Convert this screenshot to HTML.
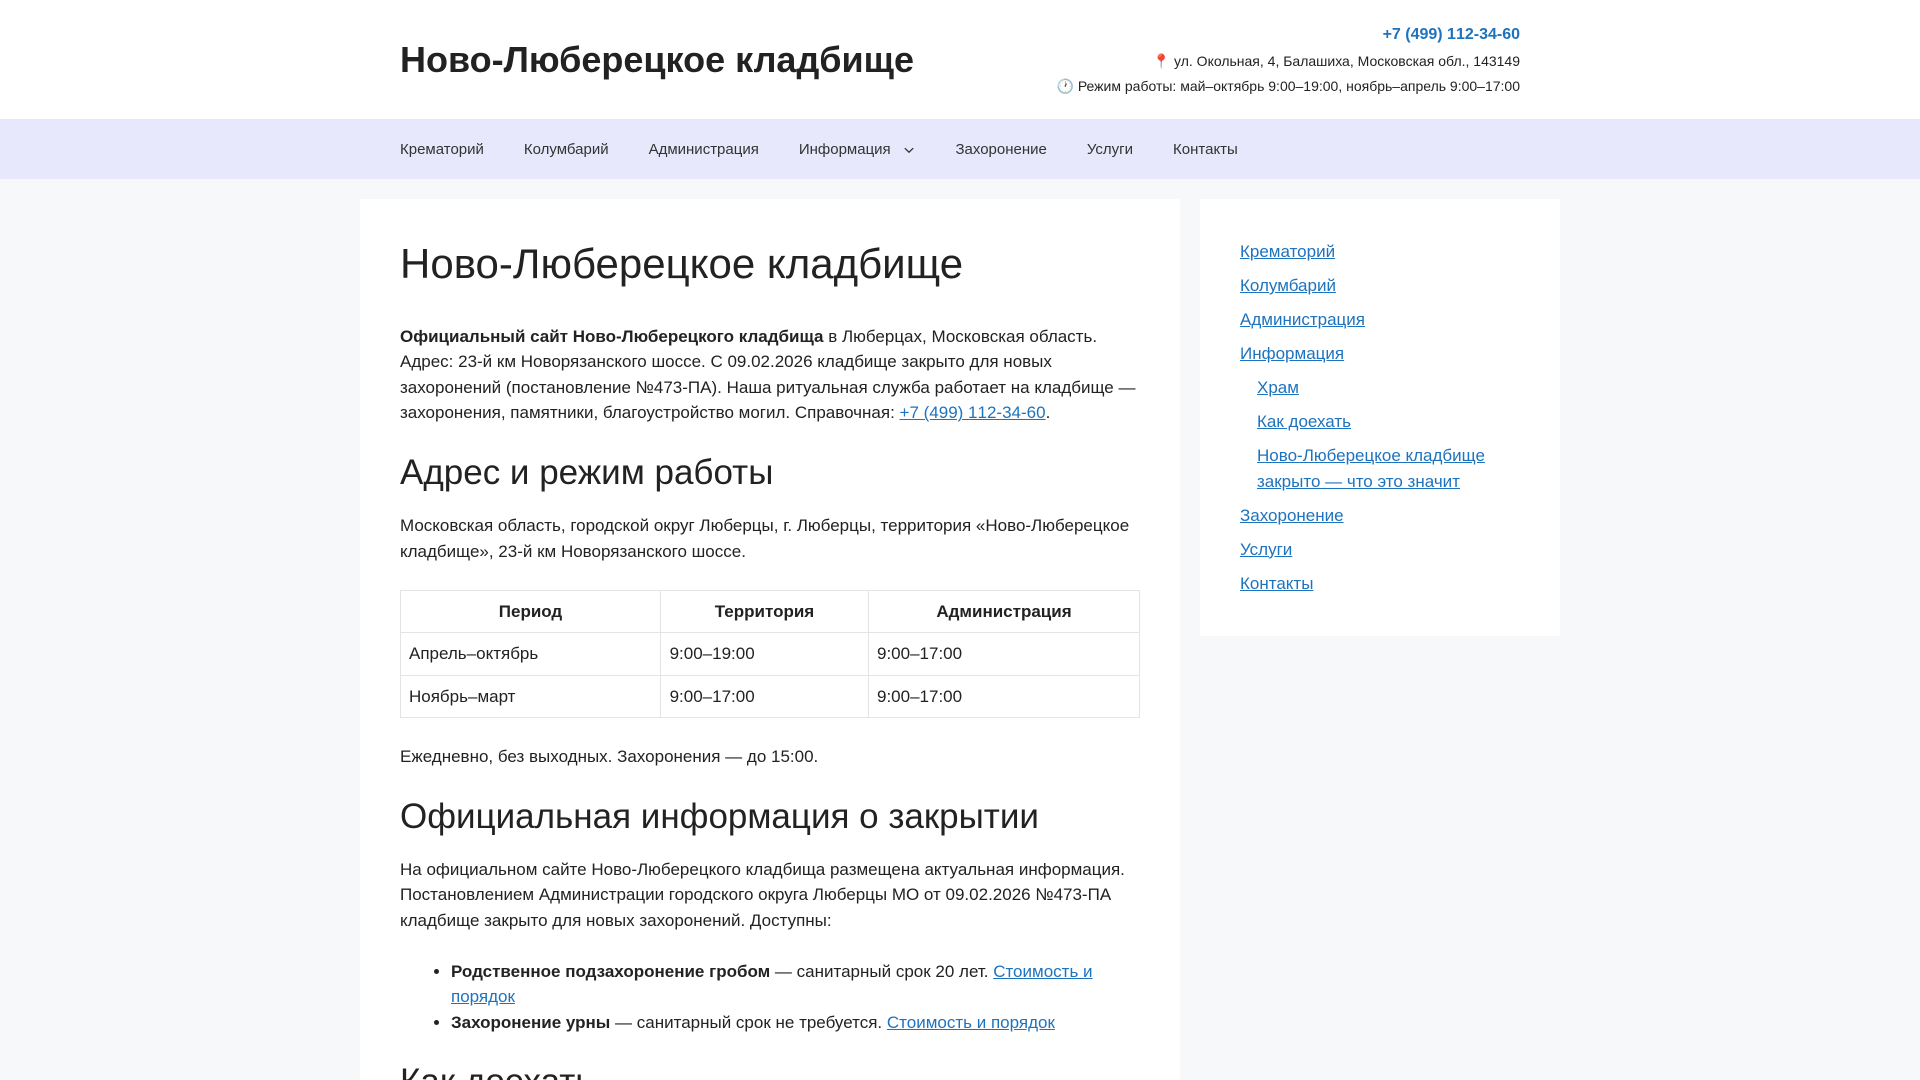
<!DOCTYPE html>
<html lang="ru"><head><meta charset="utf-8"><title>Ново-Люберецкое кладбище</title>
<style>
*{box-sizing:border-box}
html,body{margin:0;padding:0;height:1080px;overflow:hidden}
body{background:#f7f8f9;color:#222;font:17px/1.5 "Liberation Sans","Noto Sans CJK SC",sans-serif;width:1920px}
#w{position:relative;width:1920px;height:1080px;overflow:hidden}
a{color:#1e73be}
.nk{font-kerning:none}
header{background:#fff;height:119px;position:relative}
.title{position:absolute;left:400px;top:37px;font-size:36px;font-weight:700;line-height:46px;color:#222}
.info{position:absolute;right:400px;top:21px;text-align:right;font-size:14px;line-height:25px}
.info .ph{font-size:16px;font-weight:700;color:#1e73be;line-height:28px;display:block}
.info div{height:25px}
nav{background:#e8e8fc;height:60px;position:relative}
nav ul{list-style:none;margin:0;padding:0 0 0 380px;display:flex}
nav li{padding:0 20px;font-size:15px;line-height:60px;color:#333;white-space:nowrap;display:flex;align-items:center;position:relative;top:.5px}
nav svg{margin-left:12px;margin-right:.8px;display:block}
main{position:absolute;left:360px;top:199px;width:820px;height:881px;background:#fff;padding:40px;overflow:hidden}
aside{position:absolute;left:1200px;top:199px;width:360px;height:437px;background:#fff;padding:40px}
h1{font-size:42px;font-weight:400;line-height:1.2;margin:0 0 34.6px;color:#222}
h2{font-size:35px;font-weight:400;line-height:1.2;margin:0 0 20px;color:#222}
h2.d{position:relative;top:1px}
p{margin:0 0 25.5px}
table{border-collapse:collapse;width:739px;margin:0 0 25.5px;table-layout:fixed}
th,td{border:1px solid #e4e4e4;padding:8px;line-height:25.5px}
td:nth-child(2){padding-left:8.6px}
th{text-align:center;font-weight:700}
ul.l{margin:0 0 25.5px 51px;padding:0}
aside ul{list-style:none;margin:0;padding:0}
aside li{margin-bottom:8.5px}
aside li li{margin-left:17px;margin-top:8.5px}
aside li li:last-child{margin-bottom:0}
</style></head><body><div id="w">
<header>
<div class="title">Ново-Люберецкое кладбище</div>
<div class="info"><span class="ph nk">+7 (499) 112-34-60</span><div>📍 ул. Окольная, 4, Балашиха, Московская обл., 143149</div><div>🕐 Режим работы: май–октябрь 9:00–19:00, ноябрь–апрель 9:00–17:00</div></div>
</header>
<nav><ul>
<li>Крематорий</li><li>Колумбарий</li><li>Администрация</li>
<li>Информация<svg width="12" height="12" viewBox="0 0 12 12"><path d="M1.8 4.2 6 8.2l4.2-4" fill="none" stroke="#333" stroke-width="1.3"/></svg></li>
<li>Захоронение</li><li>Услуги</li><li>Контакты</li>
</ul></nav>
<main>
<h1>Ново-Люберецкое кладбище</h1>
<p><strong>Официальный сайт Ново-Люберецкого кладбища</strong> в Люберцах, Московская область. Адрес: 23-й км Новорязанского шоссе. С 09.02.2026 кладбище закрыто для новых захоронений (постановление №473-ПА). Наша ритуальная служба работает на кладбище — захоронения, памятники, благоустройство могил. Справочная: <a href="#" class="nk">+7 (499) 112-34-60</a>.</p>
<h2 class="d">Адрес и режим работы</h2>
<p>Московская область, городской округ Люберцы, г. Люберцы, территория «Ново-Люберецкое кладбище», 23-й км Новорязанского шоссе.</p>
<table><colgroup><col style="width:260px"><col style="width:208px"><col style="width:271px"></colgroup>
<tr><th>Период</th><th>Территория</th><th>Администрация</th></tr>
<tr><td>Апрель–октябрь</td><td>9:00–19:00</td><td>9:00–17:00</td></tr>
<tr><td>Ноябрь–март</td><td>9:00–17:00</td><td>9:00–17:00</td></tr></table>
<p>Ежедневно, без выходных. Захоронения — до 15:00.</p>
<h2 class="d">Официальная информация о закрытии</h2>
<p>На официальном сайте Ново-Люберецкого кладбища размещена актуальная информация. Постановлением Администрации городского округа Люберцы МО от 09.02.2026 №473-ПА кладбище закрыто для новых захоронений. Доступны:</p>
<ul class="l"><li><strong>Родственное подзахоронение гробом</strong> — санитарный срок 20 лет. <a href="#">Стоимость и порядок</a></li>
<li><strong>Захоронение урны</strong> — санитарный срок не требуется. <a href="#">Стоимость и порядок</a></li></ul>
<h2>Как доехать</h2>
</main>
<aside><ul>
<li><a href="#">Крематорий</a></li><li><a href="#">Колумбарий</a></li><li><a href="#">Администрация</a></li>
<li><a href="#">Информация</a><ul><li><a href="#">Храм</a></li><li><a href="#">Как доехать</a></li><li><a href="#">Ново-Люберецкое кладбище закрыто — что это значит</a></li></ul></li>
<li><a href="#">Захоронение</a></li><li><a href="#">Услуги</a></li><li style="margin-bottom:0"><a href="#">Контакты</a></li>
</ul></aside>
</div></body></html>
